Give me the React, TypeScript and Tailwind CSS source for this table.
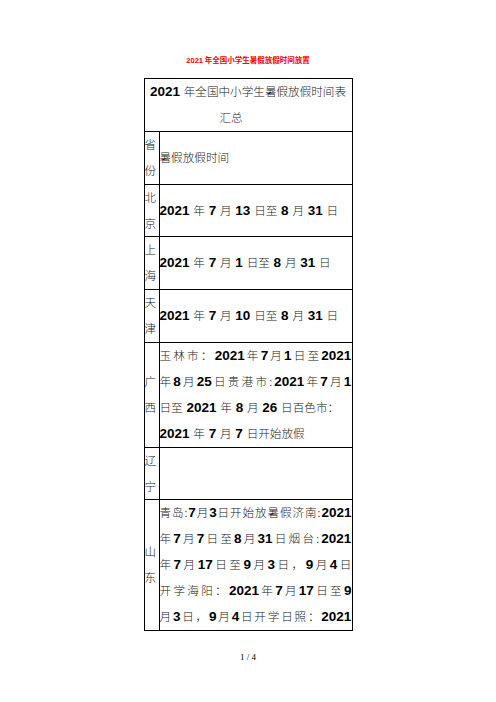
import React from "react";

const NUM = "font-['Liberation_Sans',sans-serif] font-bold text-[13.5px] leading-none text-black";
const SP = "font-['Liberation_Sans',sans-serif] text-[13.5px] leading-none";

// split a run of text into CJK pieces, spaces and bold Latin digits
function Mixed({ text }: { text: string }) {
    return (
        <>
            {text.split(/(\d+|\s+)/).filter(Boolean).map((part, i) =>
                /^\d+$/.test(part) ? (
                    <span key={i} className={NUM}>{part}</span>
                ) : /^\s+$/.test(part) ? (
                    <span key={i} className={SP}> </span>
                ) : (
                    <span key={i}>{part}</span>
                )
            )}
        </>
    );
}

// one justified line: every character / number spread across the cell
function JLine({ text }: { text: string }) {
    const toks = text.match(/\d+|\S/g) || [];
    return (
        <div className="flex justify-between items-baseline whitespace-nowrap h-[25.9px]">
            {toks.map((t, i) =>
                /^\d+$/.test(t) ? (
                    <span key={i} className={NUM}>{t}</span>
                ) : (
                    <span key={i}>{t}</span>
                )
            )}
        </div>
    );
}

function Line({ text }: { text: string }) {
    return (
        <div className="whitespace-nowrap h-[25.9px]">
            <Mixed text={text} />
        </div>
    );
}

const rows: { prov: string; lines: { t: string; j?: boolean }[] }[] = [
    { prov: "北京", lines: [{ t: "2021 年 7 月 13 日至 8 月 31 日" }] },
    { prov: "上海", lines: [{ t: "2021 年 7 月 1 日至 8 月 31 日" }] },
    { prov: "天津", lines: [{ t: "2021 年 7 月 10 日至 8 月 31 日" }] },
    {
        prov: "广西",
        lines: [
            { t: "玉林市：2021 年 7 月 1 日至 2021", j: true },
            { t: "年 8 月 25 日贵港市:2021 年 7 月 1", j: true },
            { t: "日至 2021 年 8 月 26 日百色市：" },
            { t: "2021 年 7 月 7 日开始放假" },
        ],
    },
    { prov: "辽宁", lines: [] },
    {
        prov: "山东",
        lines: [
            { t: "青岛:7 月 3 日开始放暑假济南:2021", j: true },
            { t: "年 7 月 7 日至 8 月 31 日烟台:2021", j: true },
            { t: "年 7 月 17 日至 9 月 3 日，9 月 4 日", j: true },
            { t: "开学海阳：2021 年 7 月 17 日至 9", j: true },
            { t: "月 3 日，9 月 4 日开学日照：2021", j: true },
        ],
    },
];

export default function App() {
    return (
        <div className="w-[496px] h-[702px] bg-white flex flex-col items-center pt-[55px] font-['Noto_Sans_CJK_SC',sans-serif]">
            <div className="h-[10px] leading-[10px] text-[7.5px] font-bold text-[#ff0000] whitespace-nowrap">
                <span className="font-['Liberation_Sans',sans-serif]">2021</span> 年全国小学生暑假放假时间放置
            </div>

            <table className="mt-[13px] w-[209px] table-fixed border-collapse border border-black text-[11.6px] leading-[25.9px] text-[#222] font-light">
                <colgroup>
                    <col className="w-[15px]" />
                    <col />
                </colgroup>
                <tbody>
                    <tr>
                        <td colSpan={2} className="border border-black p-0">
                            <div className="text-center whitespace-nowrap h-[25.9px]">
                                <Mixed text="2021 年全国中小学生暑假放假时间表" />
                            </div>
                            <div className="pl-[75px] h-[25.9px]">汇总</div>
                        </td>
                    </tr>
                    <tr>
                        <td className="border border-black p-0 align-middle break-all">省份</td>
                        <td className="border border-black p-0 align-middle">暑假放假时间</td>
                    </tr>
                    {rows.map(r => (
                        <tr key={r.prov}>
                            <td className="border border-black p-0 align-middle break-all">{r.prov}</td>
                            <td className="border border-black p-0 align-middle">
                                {r.lines.map((l, i) =>
                                    l.j ? <JLine key={i} text={l.t} /> : <Line key={i} text={l.t} />
                                )}
                            </td>
                        </tr>
                    ))}
                </tbody>
            </table>

            <div className="mt-[20px] text-[9px] leading-[12px] font-['Liberation_Serif',serif] text-black">
                1 / 4
            </div>
        </div>
    );
}
